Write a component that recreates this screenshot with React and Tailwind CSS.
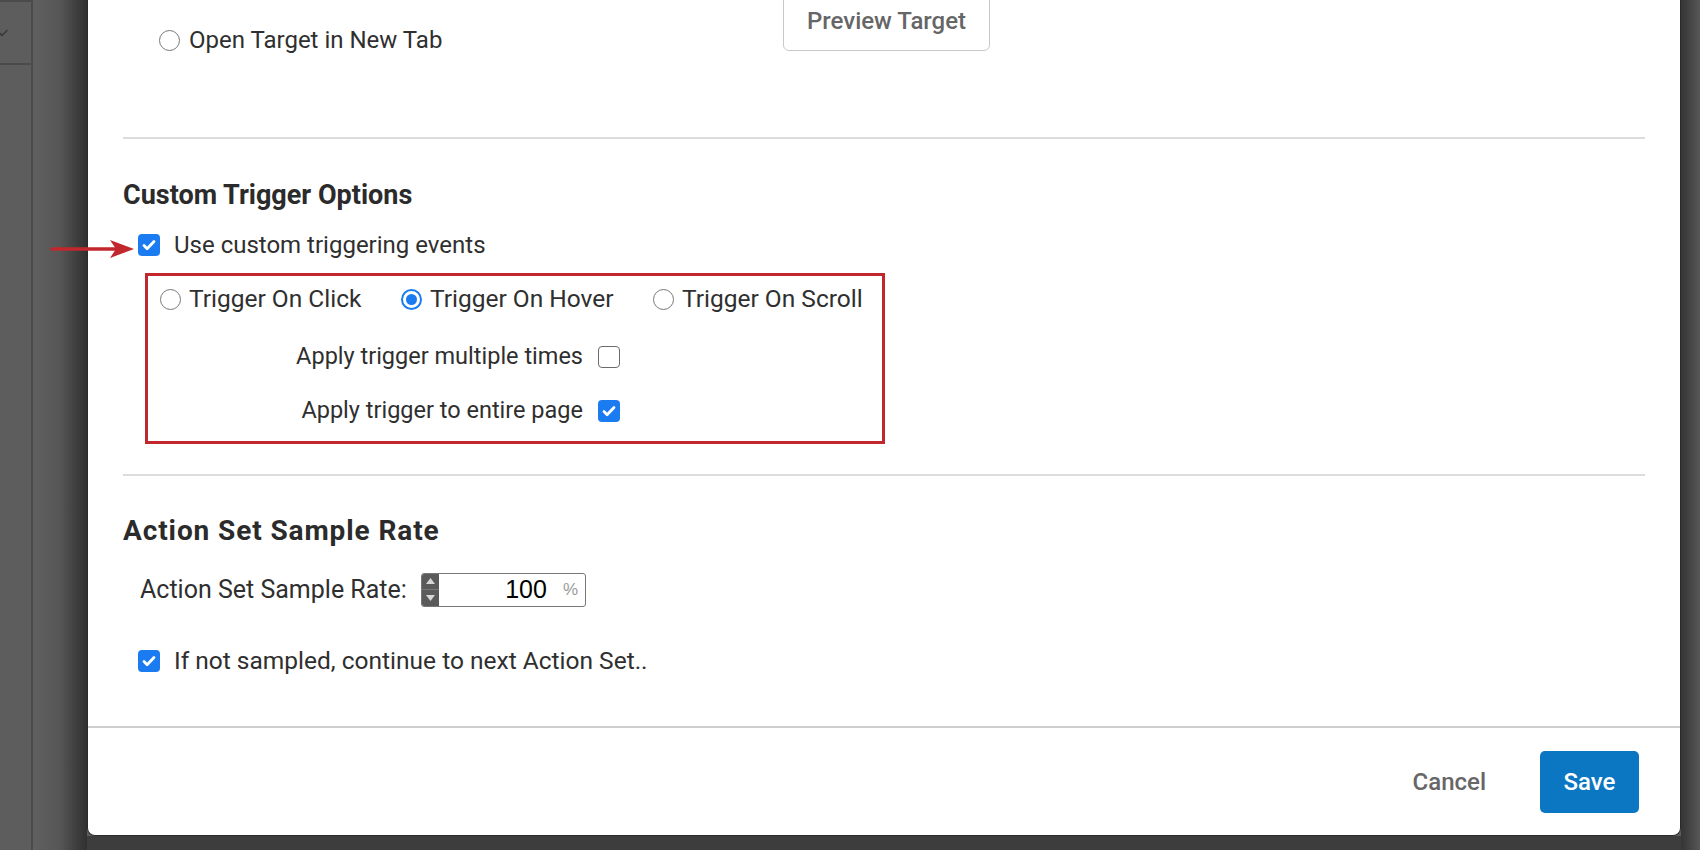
import { ChevronDown } from 'lucide-react'

function Radio({ checked }) {
  if (checked) {
    return (
      <span className="flex h-[21px] w-[21px] shrink-0 items-center justify-center rounded-full border-2 border-[#1b7cf2] bg-white">
        <span className="h-[11px] w-[11px] rounded-full bg-[#1b7cf2]" />
      </span>
    )
  }
  return <span className="h-[21px] w-[21px] shrink-0 rounded-full border border-[#777] bg-white" />
}

function Checkbox({ checked }) {
  if (checked) {
    return (
      <span className="flex h-[22px] w-[22px] shrink-0 items-center justify-center rounded-[4px] bg-[#1b7cf2]">
        <svg width="16" height="16" viewBox="0 0 16 16" fill="none">
          <path d="M3 8.6l3.1 3.1L13 4.6" stroke="white" strokeWidth="2.8" strokeLinecap="round" strokeLinejoin="round" />
        </svg>
      </span>
    )
  }
  return <span className="h-[22px] w-[22px] shrink-0 rounded-[4px] border-[1.5px] border-[#6b6b6b] bg-white" />
}

export default function App() {
  return (
    <div className="relative flex h-[850px] w-[1700px] overflow-hidden bg-[#5d5d5d] font-['Roboto',sans-serif] text-[#2f2f2f]">
      {/* background page behind the dialog */}
      <div className="flex w-[87px] shrink-0">
        <div className="w-[33px] border-r-2 border-[#4b4b4b]">
          <div className="flex h-[65px] items-center border-y-2 border-[#4b4b4b]">
            <ChevronDown className="-ml-[8px] h-[20px] w-[20px] text-[#3a3a3a]" strokeWidth={2} />
          </div>
        </div>
        <div className="flex-1 bg-linear-to-r from-[#606060] via-[#565656] to-[#303030]" />
      </div>

      {/* dialog */}
      <div className="flex w-[1594px] shrink-0 flex-col">
        <div className="flex h-[836px] flex-col rounded-b-[8px] border-x border-b border-[#2a2a2a] bg-white">
          <div className="flex flex-1 flex-col px-[35px]">
            {/* target section (scrolled) */}
            <div className="flex h-[139px] items-start border-b-2 border-[#dcdcdc]">
              <div className="mt-[26px] flex h-[28px] w-[660px] items-center pl-[36px]">
                <Radio />
                <span className="ml-[9px] text-[24px] leading-[28px]">Open Target in New Tab</span>
              </div>
              <button className="-mt-[10px] h-[61px] w-[207px] rounded-[6px] border border-[#c8c8c8] pt-0 text-[24px] font-medium text-[#666]">
                Preview Target
              </button>
            </div>

            {/* custom trigger options */}
            <div className="border-b-2 border-[#dcdcdc] pb-[30px] pt-[41px]">
              <h2 className="h-[30px] text-[27px] font-bold leading-[30px] text-[#2b2b2b]">Custom Trigger Options</h2>
              <div className="mt-[20px] flex h-[30px] items-center pl-[15px]">
                <Checkbox checked />
                <span className="ml-[14px] text-[24px] leading-[30px]">Use custom triggering events</span>
              </div>
              <div className="ml-[22px] mt-[13px] h-[171px] w-[740px] border-[3px] border-[#c1272d] pt-[8px]">
                <div className="flex h-[30px] items-center pl-[12px] text-[24.5px]">
                  <div className="flex w-[241px] items-center gap-[8px]">
                    <Radio />
                    <span>Trigger On Click</span>
                  </div>
                  <div className="flex w-[252px] items-center gap-[8px]">
                    <Radio checked />
                    <span>Trigger On Hover</span>
                  </div>
                  <div className="flex items-center gap-[8px]">
                    <Radio />
                    <span>Trigger On Scroll</span>
                  </div>
                </div>
                <div className="mt-[28px] flex h-[30px] w-[472px] items-center justify-end gap-[15px] text-[23.5px]">
                  <span>Apply trigger multiple times</span>
                  <Checkbox />
                </div>
                <div className="mt-[24px] flex h-[30px] w-[472px] items-center justify-end gap-[15px] text-[23.5px]">
                  <span>Apply trigger to entire page</span>
                  <Checkbox checked />
                </div>
              </div>
            </div>

            {/* sample rate */}
            <div className="pt-[40px]">
              <h2 className="h-[30px] text-[28px] font-bold leading-[30px] tracking-[0.9px] text-[#2b2b2b]">Action Set Sample Rate</h2>
              <div className="mt-[25px] flex items-center pl-[17px]">
                <span className="w-[281px] text-[25px]">Action Set Sample Rate:</span>
                <div className="flex h-[34px] w-[165px] overflow-hidden rounded-[3px] border border-[#777]">
                  <div className="flex w-[17px] flex-col items-center justify-center gap-[5px] bg-[#5a5a5a]">
                    <svg width="9" height="6" viewBox="0 0 9 6"><path d="M4.5 0L9 6H0z" fill="#d6d6d6" /></svg>
                    <div className="h-px w-full bg-[#777]" />
                    <svg width="9" height="6" viewBox="0 0 9 6"><path d="M0 0h9L4.5 6z" fill="#d6d6d6" /></svg>
                  </div>
                  <div className="flex flex-1 items-center justify-end pr-[7px] font-['Liberation_Sans',sans-serif]">
                    <span className="text-[25px] leading-none text-black">100</span>
                    <span className="ml-[16px] text-[17px] leading-none text-[#9a9a9a]">%</span>
                  </div>
                </div>
              </div>
              <div className="mt-[37px] flex h-[30px] items-center pl-[15px]">
                <Checkbox checked />
                <span className="ml-[14px] text-[24.5px] leading-[30px]">If not sampled, continue to next Action Set..</span>
              </div>
            </div>
          </div>

          {/* footer */}
          <div className="flex h-[109px] items-center justify-end border-t-2 border-[#cfcfcf] pr-[41px]">
            <button className="text-[24px] font-medium text-[#666]">Cancel</button>
            <button className="ml-[54px] h-[62px] w-[99px] rounded-[5px] bg-[#0b77c3] text-[24px] font-medium text-white">
              Save
            </button>
          </div>
        </div>
        <div className="flex-1 bg-[#3d3d3d]" />
      </div>

      <div className="flex-1 bg-linear-to-r from-[#353535] to-[#575757]" />

      {/* annotation arrow */}
      <svg className="absolute left-[50px] top-[238px]" width="86" height="22" viewBox="0 0 86 22">
        <path d="M2 11H66" stroke="#c1272d" strokeWidth="3.5" strokeLinecap="round" />
        <path d="M60 2L84 11L60 20L66 11z" fill="#c1272d" />
      </svg>
    </div>
  )
}
